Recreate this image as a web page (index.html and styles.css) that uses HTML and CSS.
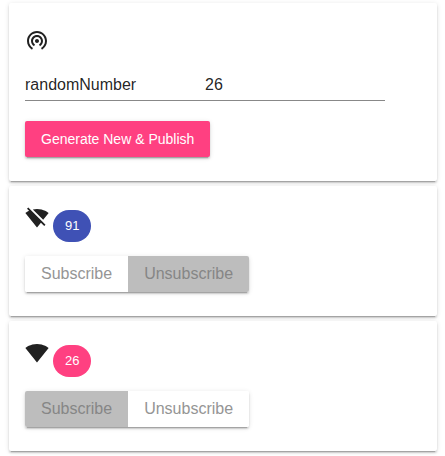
FILE: index.html
```html
<!DOCTYPE html>
<html lang="en">
<head>
<meta charset="utf-8">
<title>Publish and subscribe</title>
<link rel="stylesheet" href="styles.css">
</head>
<body>
<main class="cards">
  <section class="card card-publish">
    <svg class="icon" viewBox="0 0 24 24" aria-hidden="true"><path d="M12 11c-1.1 0-2 .9-2 2s.9 2 2 2 2-.9 2-2-.9-2-2-2zm6 2c0-3.31-2.69-6-6-6s-6 2.690-6 6c0 2.220 1.210 4.150 3 5.190l1-1.740c-1.190-.7-2-1.970-2-3.450 0-2.210 1.790-4 4-4s4 1.790 4 4c0 1.480-.81 2.750-2 3.450l1 1.740c1.790-1.040 3-2.970 3-5.190zM12 3C6.480 3 2 7.480 2 13c0 3.700 2.010 6.920 4.990 8.650l1-1.730C5.610 18.530 4 15.960 4 13c0-4.420 3.580-8 8-8s8 3.580 8 8c0 2.960-1.610 5.530-4 6.920l1 1.730c2.990-1.730 5-4.950 5-8.650 0-5.520-4.480-10-10-10z"/></svg>
    <table class="values">
      <tbody>
        <tr><th scope="row">randomNumber</th><td>26</td></tr>
      </tbody>
    </table>
    <button class="button" type="button">Generate New &amp; Publish</button>
  </section>

  <section class="card">
    <div class="status">
      <svg class="icon" viewBox="0 0 24 24" aria-hidden="true"><path d="M23.640 7c-.45-.34-4.930-4-11.640-4-1.500 0-2.890.19-4.150.48L18.180 13.800 23.640 7zm-6.600 8.220L3.270 1.440 2 2.720l2.050 2.060C1.910 5.760.59 6.820.36 7l11.630 14.490.01.01.01-.01 3.900-4.860 3.320 3.320 1.270-1.270-3.460-3.460z"/></svg>
      <span class="chip chip-primary">91</span>
    </div>
    <div class="toggle-group">
      <button class="toggle" type="button" aria-pressed="false">Subscribe</button>
      <button class="toggle" type="button" aria-pressed="true">Unsubscribe</button>
    </div>
  </section>

  <section class="card">
    <div class="status">
      <svg class="icon" viewBox="0 0 24 24" aria-hidden="true"><path d="M12.010 21.490L23.640 7c-.45-.34-4.930-4-11.640-4C5.280 3 .81 6.660.36 7l11.630 14.490.01.01.01-.01z"/></svg>
      <span class="chip chip-accent">26</span>
    </div>
    <div class="toggle-group">
      <button class="toggle" type="button" aria-pressed="true">Subscribe</button>
      <button class="toggle" type="button" aria-pressed="false">Unsubscribe</button>
    </div>
  </section>
</main>
</body>
</html>
```
FILE: styles.css
```css
* {
  box-sizing: border-box;
}

body {
  margin: 0;
  background: #fff;
  color: rgba(0, 0, 0, 0.87);
  font-family: "Liberation Sans", Arial, sans-serif;
  font-size: 16px;
}

.cards {
  display: flex;
  flex-direction: column;
  gap: 5px;
  padding: 3px 8px 5px 9px;
}

.card {
  display: flex;
  flex-direction: column;
  align-items: flex-start;
  padding: 20px 16px 24px;
  border-radius: 2px;
  background: #fff;
  box-shadow: 0 3px 1px -2px rgba(0, 0, 0, 0.2),
    0 2px 2px 0 rgba(0, 0, 0, 0.14),
    0 1px 5px 0 rgba(0, 0, 0, 0.12);
}

.card-publish {
  padding-top: 25px;
}

.icon {
  flex: none;
  width: 24px;
  height: 24px;
  fill: #212121;
}

.values {
  width: 360px;
  max-width: 100%;
  margin: 16px 0 20px;
  table-layout: fixed;
  border-spacing: 0;
}

.values th,
.values td {
  height: 33px;
  padding: 2px 0 0;
  border-bottom: 1px solid #888;
  font-weight: 400;
  text-align: left;
}

.button {
  height: 36px;
  padding: 0 16px;
  border: 0;
  border-radius: 2px;
  background: #ff4081;
  color: #fff;
  font: 500 14px "Liberation Sans", Arial, sans-serif;
  box-shadow: 0 3px 1px -2px rgba(0, 0, 0, 0.2),
    0 2px 2px 0 rgba(0, 0, 0, 0.14),
    0 1px 5px 0 rgba(0, 0, 0, 0.12);
}

.status {
  display: flex;
  gap: 4px;
  height: 36px;
  margin-bottom: 14px;
}

.chip {
  align-self: flex-end;
  padding: 8px 12px;
  border-radius: 16px;
  color: #fff;
  font-size: 13px;
  line-height: 16px;
}

.chip-primary {
  background: #3f51b5;
}

.chip-accent {
  background: #ff4081;
}

.toggle-group {
  display: flex;
  overflow: hidden;
  border-radius: 2px;
  box-shadow: 0 3px 1px -2px rgba(0, 0, 0, 0.2),
    0 2px 2px 0 rgba(0, 0, 0, 0.14),
    0 1px 5px 0 rgba(0, 0, 0, 0.12);
}

.toggle {
  height: 36px;
  padding: 0 16px;
  border: 0;
  background: #fff;
  color: #959595;
  font: 16px "Liberation Sans", Arial, sans-serif;
}

.toggle[aria-pressed="true"] {
  background: #bdbdbd;
  color: #868686;
}
```
